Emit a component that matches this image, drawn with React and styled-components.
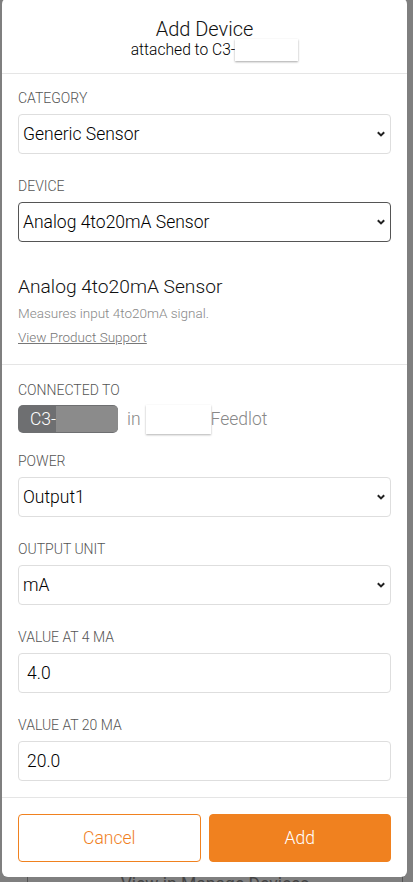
import React from "react";
import styled, { createGlobalStyle } from "styled-components";

const GlobalStyle = createGlobalStyle`
    html, body {
        margin: 0;
        padding: 0;
        background: #ffffff;
        font-family: Roboto, "Liberation Sans", sans-serif;
        font-weight: 300;
    }
    * {
        box-sizing: border-box;
    }
`;

const ORANGE = "#f0811f";

const Page = styled.div`
    position: relative;
    height: 882px;
    overflow: hidden;
    background: #ffffff;
`;

const BehindButton = styled.div`
    position: absolute;
    left: 27px;
    right: 10px;
    top: 860px;
    height: 48px;
    border: 1px solid #aaa;
    border-radius: 4px;
    display: flex;
    align-items: center;
    justify-content: center;
    font-size: 17.5px;
    font-weight: 400;
    color: #888;
`;

const Backdrop = styled.div`
    position: absolute;
    inset: 0;
    background: rgba(0, 0, 0, 0.5);
`;

const Modal = styled.div`
    position: absolute;
    left: 2px;
    top: -2px;
    width: 405px;
    background: #fff;
    border-radius: 6px;
    color: #111;
`;

const Header = styled.div`
    padding: 19px 16px 13px;
    text-align: center;
    border-bottom: 1px solid #e5e5e5;
`;

const Title = styled.div`
    font-size: 20px;
    line-height: 24px;
    color: #111;
`;

const Sub = styled.div`
    font-size: 15.6px;
    line-height: 19px;
    color: #000;
`;

const Redacted = styled.span`
    display: inline-block;
    position: relative;
    width: 43px;
    height: 19px;
    vertical-align: top;

    &::after {
        content: "";
        position: absolute;
        left: 0;
        top: -2px;
        width: 63px;
        height: 22px;
        background: #fff;
        box-shadow: 0 1px 2px rgba(0, 0, 0, 0.35);
    }
`;

const Section = styled.div`
    padding: ${(p) => p.$pad || "16px 16px 16px"};
    border-bottom: 1px solid #e5e5e5;
`;

const Field = styled.div`
    margin-bottom: ${(p) => (p.$gap !== undefined ? p.$gap : 24)}px;
`;

const Label = styled.div`
    font-size: 14px;
    line-height: 16px;
    color: #555;
    text-transform: uppercase;
    margin-bottom: ${(p) => p.$mb || 8}px;
`;

const SelectBox = styled.div`
    height: 40px;
    border: 1px solid ${(p) => (p.$focused ? "#555" : "#dedede")};
    border-radius: 4px;
    display: flex;
    align-items: center;
    justify-content: space-between;
    padding: 0 5px 0 4px;
    font-size: 17.5px;
    color: #000;
`;

const Input = styled.input`
    display: block;
    width: 100%;
    height: 40px;
    border: 1px solid #dedede;
    border-radius: 4px;
    padding: 0 8px;
    font-family: inherit;
    font-size: 17.5px;
    font-weight: 300;
    color: #000;
    outline: none;
`;

const DeviceName = styled.div`
    margin-top: 34px;
    font-size: 19.2px;
    line-height: 22px;
    color: #111;
`;

const Desc = styled.div`
    margin-top: 7px;
    font-size: 13.5px;
    line-height: 16px;
    color: #888;
`;

const SupportLink = styled.a`
    display: block;
    margin-top: 8px;
    font-size: 13.5px;
    line-height: 16px;
    color: #777;
    text-decoration: underline;
`;

const ConnectRow = styled.div`
    display: flex;
    align-items: center;
    height: 28px;
    font-size: 17.5px;
    color: #888;
`;

const Chip = styled.div`
    display: flex;
    align-items: stretch;
    height: 28px;
    width: 100px;
    border-radius: 5px;
    overflow: hidden;
    background: #6e6f71;
    color: #fff;
    padding-left: 12px;

    span {
        display: flex;
        align-items: center;
    }
`;

const ChipMask = styled.div`
    flex: 1;
    background: #8b8b8b;
    margin: 1px 0;
    border-radius: 0 4px 4px 0;
`;

const InText = styled.span`
    margin: 0 5px 0 9px;
`;

const WhiteMask = styled.div`
    width: 65px;
    height: 29px;
    background: #fff;
    box-shadow: 0 1px 2px rgba(0, 0, 0, 0.3);
`;

const Footer = styled.div`
    display: grid;
    grid-template-columns: 1fr 1fr;
    gap: 8px;
    padding: 16px 16px 15px;
`;

const Button = styled.button`
    height: 48px;
    border-radius: 4px;
    font-family: inherit;
    font-size: 17.5px;
    font-weight: 300;
    border: 1px solid ${ORANGE};
    background: ${(p) => (p.$primary ? ORANGE : "#fff")};
    color: ${(p) => (p.$primary ? "#fff" : ORANGE)};
    cursor: pointer;
`;

const Chevron = () => (
    <svg width="8" height="6" viewBox="0 0 8 6">
        <path d="M0.8 1.2 L4 4.4 L7.2 1.2" fill="none" stroke="#222" strokeWidth="2" />
    </svg>
);

const Select = ({ value, focused }) => (
    <SelectBox $focused={focused}>
        <span>{value}</span>
        <Chevron />
    </SelectBox>
);

export default function App() {
    return (
        <>
            <GlobalStyle />
            <Page>
                <BehindButton>View in Manage Devices</BehindButton>
                <Backdrop />
                <Modal>
                    <Header>
                        <Title>Add Device</Title>
                        <Sub>
                            attached to C3-<Redacted />
                        </Sub>
                    </Header>

                    <Section $pad="16px 16px 19px">
                        <Field>
                            <Label>Category</Label>
                            <Select value="Generic Sensor" />
                        </Field>
                        <Field $gap={0}>
                            <Label>Device</Label>
                            <Select value="Analog 4to20mA Sensor" focused />
                        </Field>
                        <DeviceName>Analog 4to20mA Sensor</DeviceName>
                        <Desc>Measures input 4to20mA signal.</Desc>
                        <SupportLink>View Product Support</SupportLink>
                    </Section>

                    <Section $pad="17px 16px 16px">
                        <Field $gap={20}>
                            <Label $mb={7}>Connected To</Label>
                            <ConnectRow>
                                <Chip>
                                    <span>C3-</span>
                                    <ChipMask />
                                </Chip>
                                <InText>in</InText>
                                <WhiteMask />
                                <span>Feedlot</span>
                            </ConnectRow>
                        </Field>
                        <Field>
                            <Label>Power</Label>
                            <Select value="Output1" />
                        </Field>
                        <Field>
                            <Label>Output Unit</Label>
                            <Select value="mA" />
                        </Field>
                        <Field>
                            <Label>Value at 4 mA</Label>
                            <Input defaultValue="4.0" />
                        </Field>
                        <Field $gap={0}>
                            <Label>Value at 20 mA</Label>
                            <Input defaultValue="20.0" />
                        </Field>
                    </Section>

                    <Footer>
                        <Button>Cancel</Button>
                        <Button $primary>Add</Button>
                    </Footer>
                </Modal>
            </Page>
        </>
    );
}
